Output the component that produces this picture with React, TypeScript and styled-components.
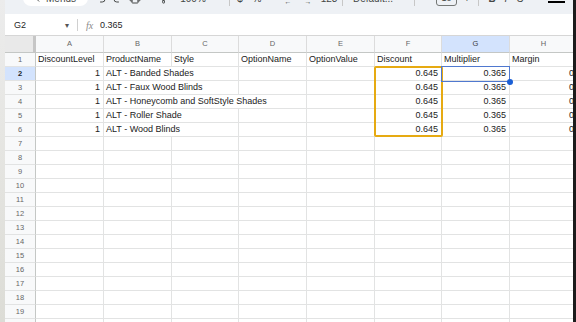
import React from "react";
import styled, { createGlobalStyle } from "styled-components";
import { Undo2, Redo2, Printer, PaintRoller, ChevronLeft } from "lucide-react";

const GlobalStyle = createGlobalStyle`
  html, body {
    margin: 0;
    padding: 0;
    background: #fff;
  }
  body {
    font-family: "Liberation Sans", Arial, sans-serif;
    overflow: hidden;
  }
`;

const COL_WIDTHS = [31, 68, 68, 67, 68, 68, 67, 68, 68];
const LETTERS = ["A", "B", "C", "D", "E", "F", "G", "H"];

type CellData = { text: string; right?: boolean; span?: number };

// rows of the sheet, each entry a cell; spans cover empty cells the text spills into
const SHEET: CellData[][] = [
  [
    { text: "DiscountLevel" },
    { text: "ProductName" },
    { text: "Style" },
    { text: "OptionName" },
    { text: "OptionValue" },
    { text: "Discount" },
    { text: "Multiplier" },
    { text: "Margin" },
  ],
  ...[
    { name: "ALT - Banded Shades", span: 2 },
    { name: "ALT - Faux Wood Blinds", span: 2 },
    { name: "ALT - Honeycomb and SoftStyle Shades", span: 3 },
    { name: "ALT - Roller Shade", span: 2 },
    { name: "ALT - Wood Blinds", span: 2 },
  ].map((p) => {
    const row: CellData[] = [
      { text: "1", right: true },
      { text: p.name, span: p.span },
    ];
    for (let i = 0; i < 4 - p.span; i++) row.push({ text: "" });
    row.push({ text: "0.645", right: true });
    row.push({ text: "0.365", right: true });
    row.push({ text: "0", right: true });
    return row;
  }),
];

const TOTAL_ROWS = 20;

const App: React.FC = () => {
  return (
    <>
      <GlobalStyle />
      <StyledScreen>
        <StyledEdge />
        <StyledMain>
          <StyledToolbar>
            <StyledToolbarRow>
              <StyledGap $w={18} />
              <StyledMenuPill>
                <ChevronLeft size={11} strokeWidth={2} />
                <span>Menus</span>
              </StyledMenuPill>
              <StyledGap $w={4} />
              <StyledToolSlot $w={17}>
                <Undo2 size={12} strokeWidth={2} />
              </StyledToolSlot>
              <StyledToolSlot $w={17}>
                <Redo2 size={12} strokeWidth={2} />
              </StyledToolSlot>
              <StyledToolSlot $w={17}>
                <Printer size={12} strokeWidth={2} />
              </StyledToolSlot>
              <StyledGap $w={13} />
              <StyledToolSlot $w={17}>
                <PaintRoller size={11} strokeWidth={2} />
              </StyledToolSlot>
              <StyledToolSlot $w={40}>100%</StyledToolSlot>
              <StyledGap $w={16} />
              <StyledToolSep />
              <StyledGap $w={2} />
              <StyledToolSlot $w={16}>$</StyledToolSlot>
              <StyledToolSlot $w={18}>%</StyledToolSlot>
              <StyledGap $w={12} />
              <StyledToolSlot $w={20}>
                <StyledDecimal>
                  <span>.0</span>
                  <span>←</span>
                </StyledDecimal>
              </StyledToolSlot>
              <StyledToolSlot $w={20}>
                <StyledDecimal>
                  <span>.00</span>
                  <span>→</span>
                </StyledDecimal>
              </StyledToolSlot>
              <StyledToolSlot $w={22}>123</StyledToolSlot>
              <StyledGap $w={2} />
              <StyledToolSep />
              <StyledGap $w={10} />
              <StyledToolSlot $w={60} $left>
                Default...
              </StyledToolSlot>
              <StyledGap $w={1} />
              <StyledToolSep />
              <StyledGap $w={21} />
              <StyledFontBox>10</StyledFontBox>
              <StyledToolSlot $w={20}>+</StyledToolSlot>
              <StyledGap $w={1} />
              <StyledToolSep />
              <StyledGap $w={6} />
              <StyledToolSlot $w={14}>
                <b>B</b>
              </StyledToolSlot>
              <StyledToolSlot $w={14}>
                <i>I</i>
              </StyledToolSlot>
              <StyledToolSlot $w={14}>
                <s>S</s>
              </StyledToolSlot>
              <StyledGap $w={21} />
              <StyledTextColor>
                <span>A</span>
                <i />
              </StyledTextColor>
            </StyledToolbarRow>
          </StyledToolbar>

          <StyledFormulaBar>
            <StyledNameBox>
              <span>G2</span>
              <span>▾</span>
            </StyledNameBox>
            <StyledFormulaSep />
            <StyledFx>fx</StyledFx>
            <StyledFormulaValue>0.365</StyledFormulaValue>
          </StyledFormulaBar>

          <StyledGrid>
            <StyledCorner />
            {LETTERS.map((l) => (
              <StyledColHeader key={l} $active={l === "G"}>
                {l}
              </StyledColHeader>
            ))}
            {Array.from({ length: TOTAL_ROWS }, (_, r) => {
              const data = SHEET[r];
              return (
                <React.Fragment key={r}>
                  <StyledRowHeader $active={r === 1}>{r + 1}</StyledRowHeader>
                  {data
                    ? data.map((c, i) => (
                        <StyledCell key={i} $right={c.right} $span={c.span}>
                          {c.text}
                        </StyledCell>
                      ))
                    : LETTERS.map((l) => <StyledCell key={l} />)}
                </React.Fragment>
              );
            })}
            <StyledCopyRange $cols="7 / 8" $rows="3 / 8" />
            <StyledActiveCell $cols="8 / 9" $rows="3 / 4" />
          </StyledGrid>
        </StyledMain>
        <StyledDarkEdge />
      </StyledScreen>
    </>
  );
};

const StyledScreen = styled.div`
  display: flex;
  width: 576px;
  height: 322px;
  overflow: hidden;
`;

const StyledEdge = styled.div`
  flex: 0 0 5px;
  background: linear-gradient(#ececec, #e6e6e3 40%, #dcdcd6);
`;

const StyledDarkEdge = styled.div`
  flex: 0 0 3px;
  background: #1c1c1c;
`;

const StyledMain = styled.div`
  flex: 1;
  min-width: 0;
  overflow: hidden;
  display: flex;
  flex-direction: column;
`;

const StyledToolbar = styled.div`
  flex: 0 0 14px;
  background: #eef1f5;
  overflow: hidden;
`;

const StyledToolbarRow = styled.div`
  display: flex;
  align-items: center;
  height: 24px;
  margin-top: -14px;
  color: #444746;
  font-size: 10px;
  white-space: nowrap;
`;

const StyledGap = styled.div<{ $w: number }>`
  flex: 0 0 ${(p) => p.$w}px;
`;

const StyledMenuPill = styled.div`
  flex: 0 0 65px;
  box-sizing: border-box;
  height: 16px;
  border-radius: 8px;
  background: #fff;
  display: flex;
  align-items: center;
  gap: 3px;
  padding-left: 9px;
  font-size: 10px;
`;

const StyledToolSlot = styled.div<{ $w: number; $left?: boolean }>`
  flex: 0 0 ${(p) => p.$w}px;
  display: flex;
  align-items: center;
  justify-content: ${(p) => (p.$left ? "flex-start" : "center")};
  height: 16px;
  font-size: 10px;

  b,
  i,
  s {
    font-family: "Liberation Sans", Arial, sans-serif;
  }
`;

const StyledDecimal = styled.div`
  display: flex;
  flex-direction: column;
  align-items: center;
  font-size: 7px;
  line-height: 7px;
`;

const StyledToolSep = styled.div`
  flex: 0 0 1px;
  height: 16px;
  background: #c7c7c7;
`;

const StyledFontBox = styled.div`
  flex: 0 0 21px;
  box-sizing: border-box;
  height: 16px;
  border: 1px solid #747775;
  border-radius: 3px;
  display: flex;
  align-items: center;
  justify-content: center;
  font-size: 9px;
`;

const StyledTextColor = styled.div`
  flex: 0 0 17px;
  display: flex;
  flex-direction: column;
  align-items: center;
  height: 16px;
  font-size: 9px;
  line-height: 10px;

  i {
    display: block;
    width: 17px;
    height: 2px;
    margin-top: 1px;
    background: #000;
  }
`;

const StyledFormulaBar = styled.div`
  flex: 0 0 22px;
  display: flex;
  align-items: center;
  background: #fff;
  font-size: 9px;
  color: #1f1f1f;
`;

const StyledNameBox = styled.div`
  flex: 0 0 67px;
  box-sizing: border-box;
  display: flex;
  justify-content: space-between;
  align-items: center;
  padding: 0 3px 0 9px;

  span:last-child {
    font-size: 8px;
    color: #555;
  }
`;

const StyledFormulaSep = styled.div`
  flex: 0 0 1px;
  height: 12px;
  margin-left: 5px;
  background: #d0d0d0;
`;

const StyledFx = styled.div`
  margin-left: 8px;
  width: 11px;
  font-family: "Liberation Serif", serif;
  font-style: italic;
  font-size: 10px;
  color: #8a8a8a;
`;

const StyledFormulaValue = styled.div`
  margin-left: 3px;
  font-size: 9px;
`;

const StyledGrid = styled.div`
  position: relative;
  display: grid;
  grid-template-columns: ${COL_WIDTHS.map((w) => `${w}px`).join(" ")};
  grid-template-rows: 17px;
  grid-auto-rows: 14px;
  width: max-content;
  border-top: 1px solid #d6d6d6;
  margin-top: -1px;
`;

const StyledCorner = styled.div`
  box-sizing: border-box;
  background: #e9e9e9;
  border-right: 3px solid #c6c6c6;
  border-bottom: 1px solid #c4c7c5;
`;

const StyledColHeader = styled.div<{ $active?: boolean }>`
  box-sizing: border-box;
  background: ${(p) => (p.$active ? "#d3e3fd" : "#f8f9fa")};
  border-right: 1px solid #dcdcdc;
  border-bottom: 1px solid #c4c7c5;
  color: ${(p) => (p.$active ? "#3c4043" : "#666")};
  font-size: 7.5px;
  line-height: 16px;
  text-align: center;
`;

const StyledRowHeader = styled.div<{ $active?: boolean }>`
  box-sizing: border-box;
  background: ${(p) => (p.$active ? "#d3e3fd" : "#f8f9fa")};
  border-right: 1px solid #c4c7c5;
  border-bottom: 1px solid #e2e3e3;
  color: ${(p) => (p.$active ? "#1f1f1f" : "#666")};
  font-weight: ${(p) => (p.$active ? "bold" : "normal")};
  font-size: 7.5px;
  line-height: 13px;
  text-align: center;
`;

const StyledCell = styled.div<{ $right?: boolean; $span?: number }>`
  grid-column: span ${(p) => p.$span ?? 1};
  box-sizing: border-box;
  border-right: 1px solid #e2e3e3;
  border-bottom: 1px solid #e2e3e3;
  padding: 0 3px 0 2px;
  font-size: 9px;
  line-height: 13px;
  color: #222;
  white-space: nowrap;
  overflow: hidden;
  text-align: ${(p) => (p.$right ? "right" : "left")};
`;

const StyledCopyRange = styled.div<{ $cols: string; $rows: string }>`
  grid-column: ${(p) => p.$cols};
  grid-row: ${(p) => p.$rows};
  position: absolute;
  inset: -1px -1px 0 -1px;
  border: 2px solid #e6aa12;
  border-radius: 2px;
  pointer-events: none;
`;

const StyledActiveCell = styled.div<{ $cols: string; $rows: string }>`
  grid-column: ${(p) => p.$cols};
  grid-row: ${(p) => p.$rows};
  position: absolute;
  inset: -1px 0 -1px -1px;
  border: 1.5px solid #4f78cf;
  pointer-events: none;

  &::after {
    content: "";
    position: absolute;
    right: -4px;
    bottom: -4px;
    width: 6px;
    height: 6px;
    border-radius: 50%;
    background: #1a5fd6;
  }
`;

export default App;
